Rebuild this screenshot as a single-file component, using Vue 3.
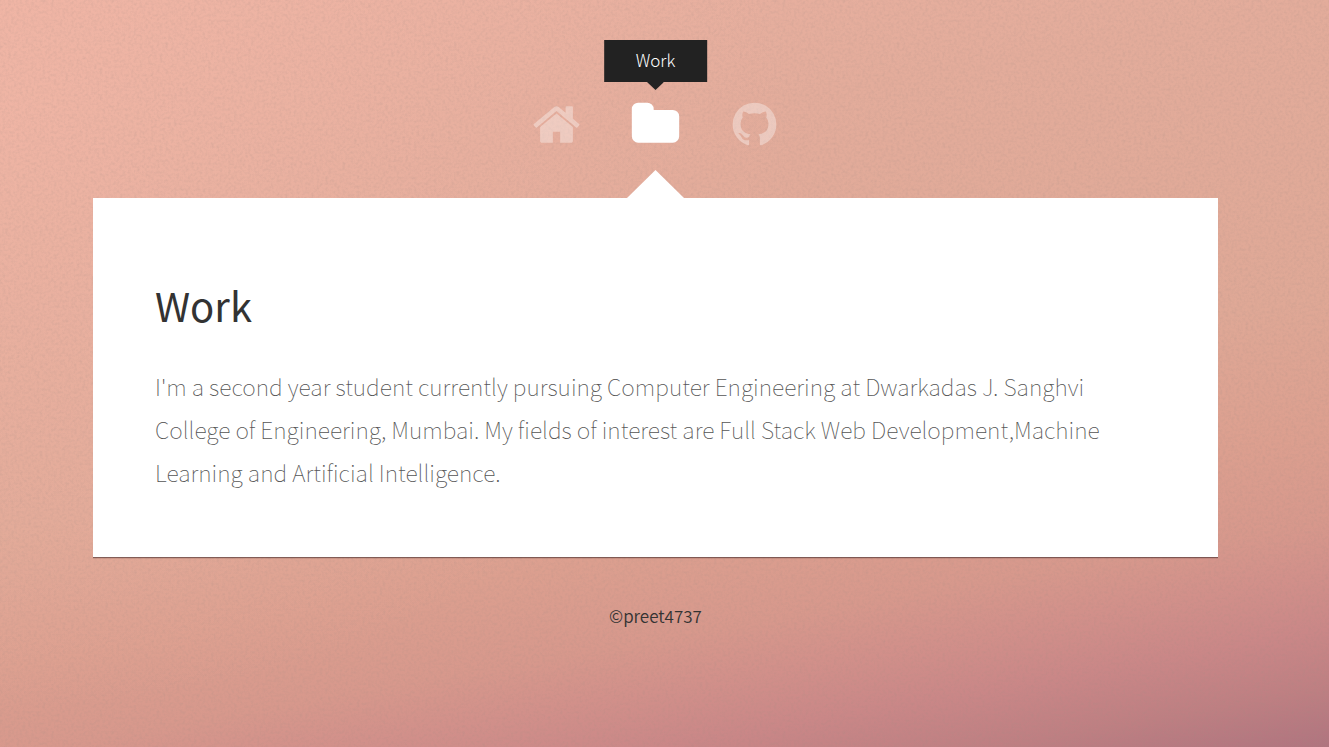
<script setup>
const links = [
  {
    id: 'home',
    label: 'Home',
    path: 'M1472 992v480q0 26-19 45t-45 19h-384v-384h-256v384h-384q-26 0-45-19t-19-45v-480q0-1 .5-3t.5-3l575-474 575 474q1 2 1 6zm223-69l-62 74q-8 9-21 11h-3q-13 0-21-7l-692-577-692 577q-12 8-24 7-13-2-21-11l-62-74q-8-10-7-23.5t11-21.5l719-599q32-26 76-26t76 26l244 204v-195q0-14 9-23t23-9h192q14 0 23 9t9 23v408l219 182q10 8 11 21.5t-7 23.5z',
  },
  {
    id: 'work',
    label: 'Work',
    active: true,
    path: 'M1728 608v704q0 92-66 158t-158 66h-1216q-92 0-158-66t-66-158v-960q0-92 66-158t158-66h320q92 0 158 66t66 158v32h672q92 0 158 66t66 158z',
  },
  {
    id: 'github',
    label: 'Github',
    path: 'M896 128q209 0 385.5 103t279.5 279.5 103 385.5q0 251-146.5 451.5t-378.5 277.5q-27 5-40-7t-13-30q0-3 .5-76.5t.5-134.5q0-97-52-142 57-6 102.5-18t94-39 81-66.5 53-105 20.5-150.5q0-119-79-206 37-91-8-204-28-9-81 11t-92 44l-38 24q-93-26-192-26t-192 26q-16-11-42.5-27t-83.5-38.5-85-13.5q-45 113-8 204-79 87-79 206 0 85 20.5 150t52.5 105 80.5 67 94 39 102.5 18q-39 36-49 103-21 10-45 15t-57 5-65.5-21.5-55.5-62.5q-19-32-48.5-52t-49.5-24l-20-3q-21 0-29 4.5t-5 11.5 9 14 13 12l7 5q22 10 43.5 38t31.5 51l10 23q13 38 44 61.5t67 30 69.5 7 55.5-3.5l23-4q0 38 .5 88.5t.5 54.5q0 18-13 30t-40 7q-232-77-378.5-277.5t-146.5-451.5q0-209 103-385.5t279.5-279.5 385.5-103z',
  },
]
</script>

<template>
  <div class="page">
    <svg class="grain" aria-hidden="true">
      <filter id="grain-filter" x="0" y="0" width="100%" height="100%">
        <feTurbulence type="fractalNoise" baseFrequency="0.35" numOctaves="2" seed="4" />
        <feColorMatrix values="0 0 0 0 0.35  0 0 0 0 0.25  0 0 0 0 0.22  0.3 0.2 0 0 -0.21" />
      </filter>
      <rect width="100%" height="100%" filter="url(#grain-filter)" />
    </svg>

    <div class="wrapper">
      <nav class="nav">
        <a
          v-for="link in links"
          :key="link.id"
          class="nav-link"
          :class="{ active: link.active }"
          :href="'#' + link.id"
          :aria-label="link.label"
        >
          <svg class="icon" viewBox="0 0 1792 1792" aria-hidden="true">
            <path :d="link.path" />
          </svg>
          <span v-if="link.active" class="tooltip">{{ link.label }}</span>
        </a>
      </nav>

      <main class="panel">
        <h1>Work</h1>
        <p>
          I'm a second year student currently pursuing Computer Engineering at Dwarkadas J. Sanghvi
          College of Engineering, Mumbai. My fields of interest are Full Stack Web
          Development,Machine Learning and Artificial Intelligence.
        </p>
      </main>

      <footer class="footer">©preet4737</footer>
    </div>
  </div>
</template>

<style>
body {
  margin: 0;
}
</style>

<style scoped>
.page {
  position: relative;
  box-sizing: border-box;
  min-height: 100vh;
  padding: 99px 18px 0 0;
  background:
    radial-gradient(ellipse 60% 80% at 0 15%, rgba(244, 184, 168, 0.6), rgba(244, 184, 168, 0)),
    linear-gradient(
      170deg,
      #ebb2a2 0%,
      #e3ac9b 24%,
      #dfa896 54%,
      #dc9f8f 68%,
      #d7988c 77%,
      #d2908a 82%,
      #ca8787 88%,
      #be7f82 94%,
      #b0747f 100%
    );
  font-family: "Noto Sans CJK SC", "Noto Sans", sans-serif;
  font-weight: 300;
}

.grain {
  position: absolute;
  inset: 0;
  width: 100%;
  height: 100%;
}

.wrapper {
  position: relative;
  display: flex;
  flex-direction: column;
  align-items: center;
}

.nav {
  display: flex;
  gap: 48px;
  height: 99px;
}

.nav-link {
  position: relative;
  width: 51px;
  color: rgba(255, 255, 255, 0.36);
}

.nav-link.active {
  color: #fff;
}

.nav-link.active::after {
  content: "";
  position: absolute;
  bottom: 0;
  left: -3px;
  width: 57px;
  height: 28px;
  background: #fff;
  clip-path: polygon(50% 0, 100% 100%, 0 100%);
}

.icon {
  display: block;
  width: 51px;
  height: 51px;
  fill: currentColor;
}

.tooltip {
  position: absolute;
  bottom: 116px;
  left: 50%;
  padding: 0 32px 2px;
  background: #222;
  color: #fff;
  font-size: 17px;
  line-height: 40px;
  transform: translateX(-50%);
}

.tooltip::after {
  content: "";
  position: absolute;
  top: 100%;
  left: 50%;
  width: 17px;
  height: 8px;
  background: #222;
  clip-path: polygon(0 0, 100% 0, 50% 100%);
  transform: translateX(-50%);
}

.panel {
  box-sizing: border-box;
  width: 100%;
  max-width: 1125px;
  padding: 74px 62px 63px;
  background: #fff;
  box-shadow: 0 1px 0 rgba(70, 45, 45, 0.55), 0 2px 0 rgba(70, 45, 45, 0.12);
}

h1 {
  margin: 0 0 27px;
  color: #333;
  font-size: 40px;
  font-weight: 400;
  line-height: 66px;
}

p {
  margin: 0;
  color: #555;
  font-size: 23px;
  font-weight: 100;
  line-height: 43px;
}

.footer {
  margin-top: 43px;
  color: #333;
  font-size: 17px;
  font-weight: 350;
  line-height: 32px;
}
</style>
